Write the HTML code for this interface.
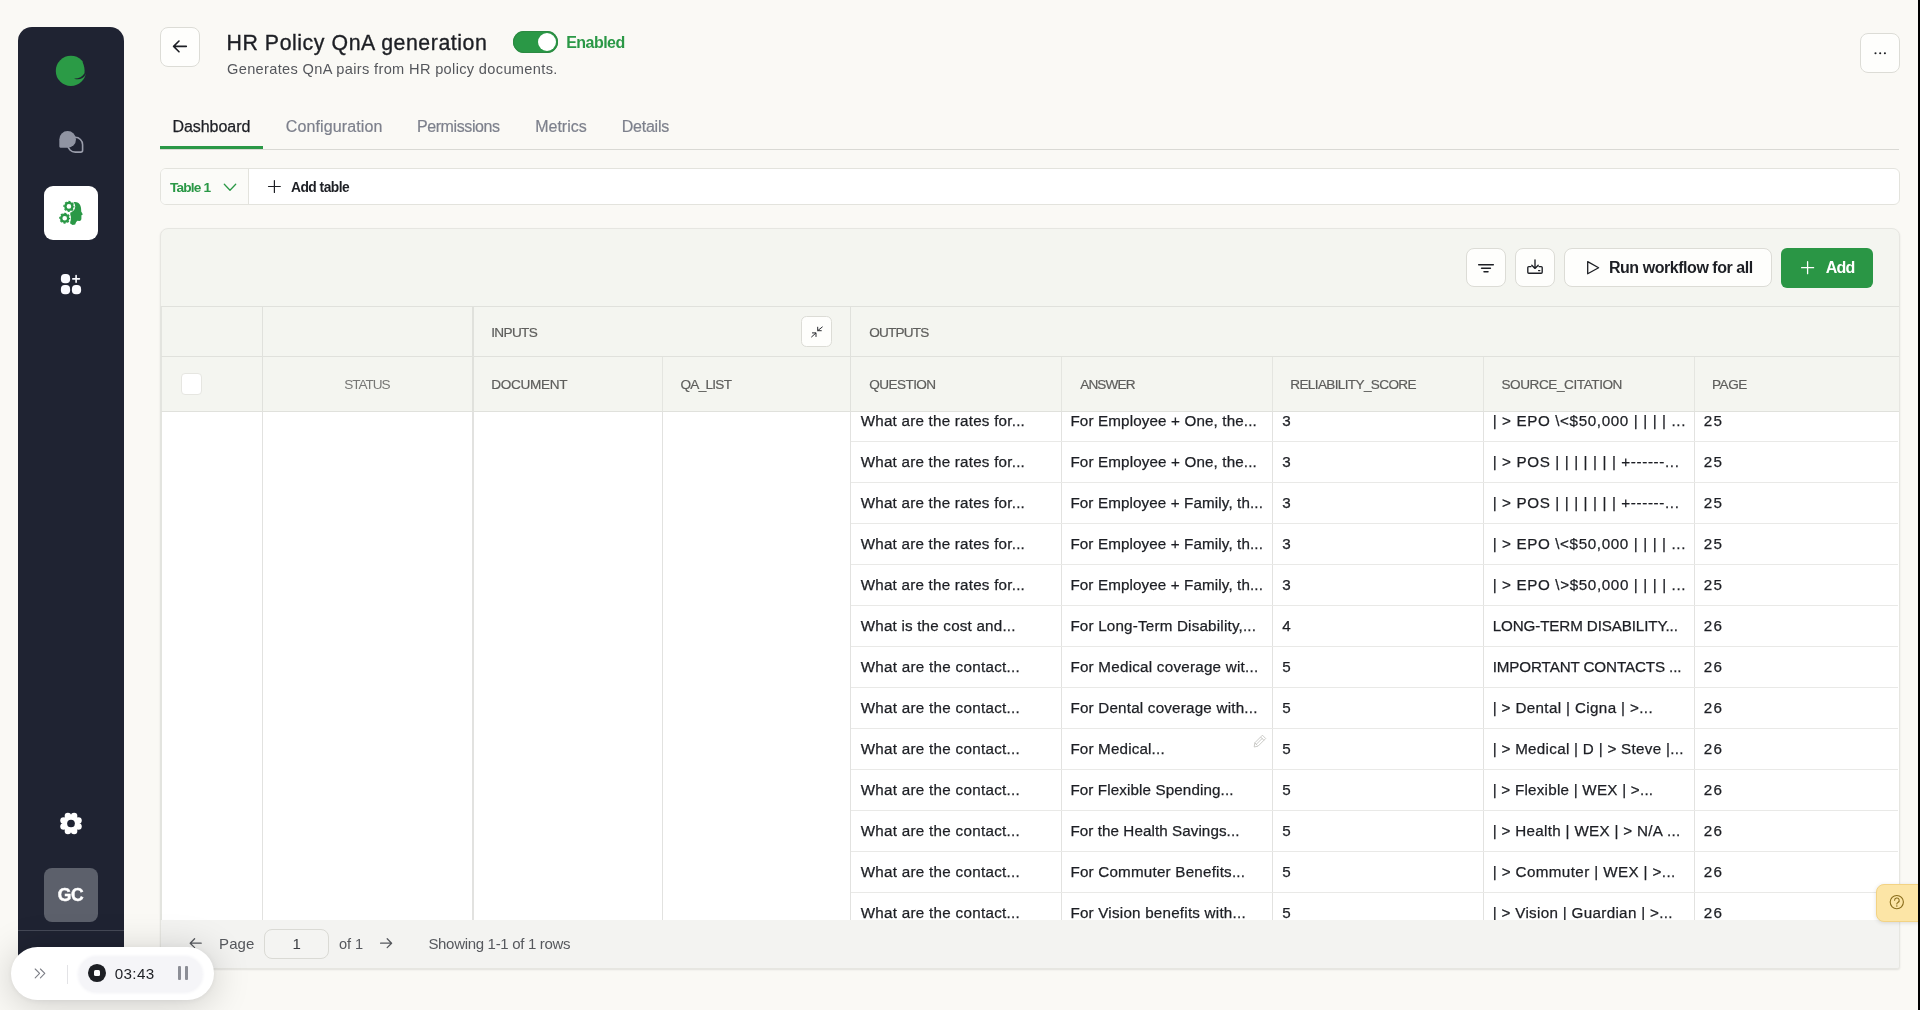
<!DOCTYPE html>
<html lang="en">
<head>
<meta charset="utf-8">
<title>HR Policy QnA generation</title>
<style>
*{box-sizing:border-box;margin:0;padding:0}
html,body{width:1920px;height:1010px;overflow:hidden}
body{background:#faf9f5;font-family:"Liberation Sans",sans-serif;color:#1d1f24;position:relative}
.abs{position:absolute}
.t{position:absolute;white-space:nowrap;line-height:20px;color:#1d1f24}
svg{position:absolute;overflow:visible}
.btn{position:absolute;background:#fefefc;border:1px solid #dcdcd6;border-radius:8px}
</style>
</head>
<body>
<div id="root" style="position:absolute;left:0;top:0;width:1920px;height:1010px;overflow:hidden;will-change:transform">
<div class="abs" style="left:18px;top:27px;width:106px;height:956px;background:#1f2332;border-radius:14px"></div>
<svg style="left:55px;top:55px" width="32" height="32" viewBox="55 55 32 32">
<circle cx="70.9" cy="70.9" r="15.1" fill="#2b9b46"/>
<path d="M74 78.5 C78.4 78.8 82.4 77 84.5 73.2 C84.9 69.6 84.3 66 82.6 62 L88 62 L88 73.4 L85.8 74.2 C83.6 78.6 78.6 80.6 74 78.5 Z" fill="#1f2332"/>
</svg>
<svg style="left:56px;top:128px" width="30" height="28" viewBox="56 128 30 28">
<path d="M75.3 152.1 H80.7 Q82.6 152.1 82.6 150.2 V144.7 A7.4 7.4 0 1 0 75.3 152.1 Z" fill="none" stroke="#9a9dab" stroke-width="1.6" stroke-linejoin="round"/>
<path d="M59.3 139.4 a8.35 8.35 0 1 1 8.35 8.35 h-7.2 q-1.15 0 -1.15 -1.15 z" fill="#9094a2"/>
</svg>
<div class="abs" style="left:44px;top:186px;width:54px;height:54px;background:#fff;border-radius:9px"></div>
<svg style="left:58px;top:200px" width="26" height="26" viewBox="58 200 26 26">
<path fill="#2a9846" d="M70.4 201.9 H74.8 C77.2 201.8 79.2 203 80.1 205 C81 207 81.3 209.2 81.2 211.4 L82.6 213.9 C82.8 214.5 82.4 214.9 81.4 215.2 L81.4 218.6 C81.4 220.2 80.6 221 79.2 220.9 L77.4 220.8 C76.4 221.6 75.6 223 75.2 224.6 L72.6 224.9 L70.2 223.4 Z"/>
<circle cx="68.9" cy="206.4" r="6.3" fill="#fff"/><circle cx="64.7" cy="218.2" r="6.3" fill="#fff"/>
<g fill="none" stroke="#2a9846">
<circle cx="68.9" cy="206.4" r="3.5" stroke-width="2.4"/>
<circle cx="68.9" cy="206.4" r="4.9" stroke-width="1.3" stroke-dasharray="2.05 1.8" stroke-dashoffset="1.02"/>
<circle cx="64.7" cy="218.2" r="3.5" stroke-width="2.4"/>
<circle cx="64.7" cy="218.2" r="4.9" stroke-width="1.3" stroke-dasharray="2.05 1.8" stroke-dashoffset="1.02"/>
</g>
</svg>
<svg style="left:60px;top:273px" width="22" height="22" viewBox="60 273 22 22">
<g fill="#fafbff"><rect x="60.9" y="274" width="9.2" height="9.2" rx="3.9"/><rect x="60.9" y="285" width="9.2" height="9.2" rx="3.9"/><rect x="71.9" y="285" width="9.2" height="9.2" rx="3.9"/></g>
<path d="M76.1 275.6 v6.6 M72.8 278.9 h6.6" stroke="#fafbff" stroke-width="1.6" stroke-linecap="round" fill="none"/>
</svg>
<svg style="left:59px;top:812px" width="24" height="24" viewBox="59 812 24 24"><g fill="#fff"><circle cx="71" cy="823.5" r="8.6"/><circle cx="78.48" cy="826.60" r="3.25"/><circle cx="74.10" cy="830.98" r="3.25"/><circle cx="67.90" cy="830.98" r="3.25"/><circle cx="63.52" cy="826.60" r="3.25"/><circle cx="63.52" cy="820.40" r="3.25"/><circle cx="67.90" cy="816.02" r="3.25"/><circle cx="74.10" cy="816.02" r="3.25"/><circle cx="78.48" cy="820.40" r="3.25"/></g><circle cx="71" cy="823.5" r="3.85" fill="#1f2332"/></svg>
<div class="abs" style="left:44px;top:868px;width:54px;height:53.5px;background:#5c606b;border-radius:8px"></div>
<span id="t0" class="t" style="left:57.70px;top:885.01px;font-size:17.5px;font-weight:700;color:#fff;letter-spacing:-0.212px;-webkit-text-stroke:0.45px #fff;">GC</span>
<div class="abs" style="left:18px;top:930px;width:106px;height:1px;background:#454957;"></div>
<div class="btn" style="left:160px;top:27px;width:40px;height:40px"></div>
<svg style="left:172px;top:39px" width="16" height="16" viewBox="172 39 16 16"><path d="M186.3 46.4 H173.6 M179 41 l-5.4 5.4 5.4 5.4" fill="none" stroke="#1d1f24" stroke-width="1.6" stroke-linecap="round" stroke-linejoin="round"/></svg>
<span id="t1" class="t" style="left:226.50px;top:33.01px;font-size:21.3px;letter-spacing:0.562px;-webkit-text-stroke:0.35px #1d1f24;">HR Policy QnA generation</span>
<div class="abs" style="left:513px;top:31px;width:45px;height:22px;border-radius:11px;background:#2a9846;box-shadow:inset 0 0 0 1px #2c8a42"></div>
<div class="abs" style="left:537.8px;top:33px;width:18.2px;height:18.2px;border-radius:50%;background:#fff"></div>
<span id="t2" class="t" style="left:566.20px;top:33.01px;font-size:16px;font-weight:700;color:#2a9846;letter-spacing:-0.527px;">Enabled</span>
<span id="t3" class="t" style="left:227.00px;top:59.02px;font-size:14.6px;color:#55575c;letter-spacing:0.337px;">Generates QnA pairs from HR policy documents.</span>
<div class="btn" style="left:1860px;top:33px;width:40px;height:40px"></div>
<svg style="left:1872px;top:50px" width="16" height="6" viewBox="1872 50 16 6"><g fill="#1d1f24"><circle cx="1875.5" cy="53.2" r="1.05"/><circle cx="1880.2" cy="53.2" r="1.05"/><circle cx="1884.9" cy="53.2" r="1.05"/></g></svg>
<span id="t4" class="t" style="left:172.50px;top:117.01px;font-size:16px;letter-spacing:-0.060px;-webkit-text-stroke:0.25px #1d1f24;">Dashboard</span>
<span id="t5" class="t" style="left:285.80px;top:117.01px;font-size:16px;color:#7d808c;letter-spacing:0.119px;-webkit-text-stroke:0.2px #7d808c;">Configuration</span>
<span id="t6" class="t" style="left:416.90px;top:117.01px;font-size:16px;color:#7d808c;letter-spacing:-0.394px;-webkit-text-stroke:0.2px #7d808c;">Permissions</span>
<span id="t7" class="t" style="left:535.20px;top:117.01px;font-size:16px;color:#7d808c;letter-spacing:-0.010px;-webkit-text-stroke:0.2px #7d808c;">Metrics</span>
<span id="t8" class="t" style="left:621.80px;top:117.01px;font-size:16px;color:#7d808c;letter-spacing:-0.251px;-webkit-text-stroke:0.2px #7d808c;">Details</span>
<div class="abs" style="left:160px;top:149px;width:1739px;height:1px;background:#d9d9d4;"></div>
<div class="abs" style="left:160px;top:146px;width:103px;height:3px;background:#2a9846;"></div>
<div class="abs" style="left:160px;top:168px;width:1740px;height:37px;background:#fff;border:1px solid #e3e3dd;border-radius:6px"></div>
<div class="abs" style="left:161px;top:169px;width:87px;height:35px;background:#fbfbf8;border-radius:5px 0 0 5px"></div>
<div class="abs" style="left:248px;top:169px;width:1px;height:35px;background:#e3e3dd;"></div>
<span id="t9" class="t" style="left:170.00px;top:178.00px;font-size:13.7px;font-weight:700;color:#2a9846;letter-spacing:-0.824px;">Table 1</span>
<svg style="left:222px;top:182px" width="16" height="12" viewBox="222 182 16 12"><path d="M224.3 184.3 l5.7 5.9 5.7 -5.9" fill="none" stroke="#2a9846" stroke-width="1.3" stroke-linecap="round" stroke-linejoin="round"/></svg>
<svg style="left:267px;top:179px" width="16" height="16" viewBox="267 179 16 16"><path d="M274.4 180.6 v11.8 M268.5 186.5 h11.8" fill="none" stroke="#1d1f24" stroke-width="1.2" stroke-linecap="round"/></svg>
<span id="t10" class="t" style="left:291.00px;top:178.00px;font-size:13.8px;font-weight:700;letter-spacing:-0.523px;">Add table</span>
<div class="abs" style="left:160px;top:228px;width:1740px;height:741px;background:#f4f5f0;border:1px solid #e6e6e1;border-radius:8px 8px 3px 3px;box-shadow:0 1px 2px rgba(0,0,0,.10)"></div>
<div class="btn" style="left:1466px;top:248px;width:40px;height:39px"></div>
<svg style="left:1477px;top:262px" width="18" height="12" viewBox="1477 262 18 12"><path d="M1478.7 264.8 h14.6 M1481.6 268.3 h8.8 M1484 271.8 h4" fill="none" stroke="#1d1f24" stroke-width="1.5" stroke-linecap="round"/></svg>
<div class="btn" style="left:1515px;top:248px;width:40px;height:39px"></div>
<svg style="left:1526px;top:258px" width="18" height="18" viewBox="1526 258 18 18"><g fill="none" stroke="#1d1f24" stroke-width="1.35" stroke-linecap="round" stroke-linejoin="round"><path d="M1535 259.8 v8.4 M1531.8 265.2 l3.2 3.2 3.2 -3.2"/><path d="M1531 266.6 h-2.2 a1 1 0 0 0 -1 1 v4.6 a1 1 0 0 0 1 1 h12.4 a1 1 0 0 0 1 -1 v-4.6 a1 1 0 0 0 -1 -1 h-2.2"/><path d="M1538.6 270.6 h1.2"/></g></svg>
<div class="btn" style="left:1564px;top:248px;width:208px;height:39px"></div>
<svg style="left:1586px;top:260px" width="15" height="16" viewBox="1586 260 15 16"><path d="M1587.7 261.6 v12.2 l10.9 -6.1 z" fill="none" stroke="#1d1f24" stroke-width="1.3" stroke-linejoin="round"/></svg>
<span id="t11" class="t" style="left:1608.90px;top:258.01px;font-size:16px;font-weight:700;letter-spacing:-0.450px;">Run workflow for all</span>
<div class="abs" style="left:1781px;top:247.5px;width:92px;height:40px;background:#2a9645;border-radius:6px"></div>
<svg style="left:1800px;top:260px" width="16" height="16" viewBox="1800 260 16 16"><path d="M1807.6 261.7 v12 M1801.6 267.7 h12" fill="none" stroke="#fff" stroke-width="1.3" stroke-linecap="round"/></svg>
<span id="t12" class="t" style="left:1825.80px;top:258.01px;font-size:16px;font-weight:700;color:#fff;letter-spacing:-0.868px;">Add</span>
<div class="abs" style="left:160px;top:306px;width:2px;height:614px;background:#e3e4df;"></div>
<div class="abs" style="left:162px;top:412px;width:1737px;height:508px;background:#fff;"></div>
<div class="abs" style="left:161px;top:306px;width:1738px;height:1px;background:#e0e1dc;"></div>
<div class="abs" style="left:161px;top:356px;width:1738px;height:1px;background:#e0e1dc;"></div>
<div class="abs" style="left:161px;top:411px;width:1738px;height:1px;background:#e0e1dc;"></div>
<div class="abs" style="left:262px;top:307px;width:1.3px;height:104px;background:#e0e1dc;"></div>
<div class="abs" style="left:472px;top:307px;width:2px;height:104px;background:#e0e1dc;"></div>
<div class="abs" style="left:850px;top:307px;width:1.3px;height:104px;background:#e0e1dc;"></div>
<div class="abs" style="left:661.8px;top:357px;width:1.3px;height:54px;background:#e4e5e0;"></div>
<div class="abs" style="left:1061px;top:357px;width:1.3px;height:54px;background:#e4e5e0;"></div>
<div class="abs" style="left:1272px;top:357px;width:1.3px;height:54px;background:#e4e5e0;"></div>
<div class="abs" style="left:1483px;top:357px;width:1.3px;height:54px;background:#e4e5e0;"></div>
<div class="abs" style="left:1694px;top:357px;width:1.3px;height:54px;background:#e4e5e0;"></div>
<div class="abs" style="left:262px;top:412px;width:1.3px;height:508px;background:#e2e2e0;"></div>
<div class="abs" style="left:472px;top:412px;width:2px;height:508px;background:#e2e2e0;"></div>
<div class="abs" style="left:661.8px;top:412px;width:1.3px;height:508px;background:#e2e2e0;"></div>
<div class="abs" style="left:850px;top:412px;width:1.3px;height:508px;background:#e2e2e0;"></div>
<div class="abs" style="left:1061px;top:412px;width:1.3px;height:508px;background:#e2e2e0;"></div>
<div class="abs" style="left:1272px;top:412px;width:1.3px;height:508px;background:#e2e2e0;"></div>
<div class="abs" style="left:1483px;top:412px;width:1.3px;height:508px;background:#e2e2e0;"></div>
<div class="abs" style="left:1694px;top:412px;width:1.3px;height:508px;background:#e2e2e0;"></div>
<div class="abs" style="left:851px;top:441px;width:1047px;height:1px;background:#e9e9e7;"></div>
<div class="abs" style="left:851px;top:482px;width:1047px;height:1px;background:#e9e9e7;"></div>
<div class="abs" style="left:851px;top:523px;width:1047px;height:1px;background:#e9e9e7;"></div>
<div class="abs" style="left:851px;top:564px;width:1047px;height:1px;background:#e9e9e7;"></div>
<div class="abs" style="left:851px;top:605px;width:1047px;height:1px;background:#e9e9e7;"></div>
<div class="abs" style="left:851px;top:646px;width:1047px;height:1px;background:#e9e9e7;"></div>
<div class="abs" style="left:851px;top:687px;width:1047px;height:1px;background:#e9e9e7;"></div>
<div class="abs" style="left:851px;top:728px;width:1047px;height:1px;background:#e9e9e7;"></div>
<div class="abs" style="left:851px;top:769px;width:1047px;height:1px;background:#e9e9e7;"></div>
<div class="abs" style="left:851px;top:810px;width:1047px;height:1px;background:#e9e9e7;"></div>
<div class="abs" style="left:851px;top:851px;width:1047px;height:1px;background:#e9e9e7;"></div>
<div class="abs" style="left:851px;top:892px;width:1047px;height:1px;background:#e9e9e7;"></div>
<span id="t13" class="t" style="left:491.20px;top:323.01px;font-size:13.6px;color:#5e5e5c;letter-spacing:-0.638px;-webkit-text-stroke:0.2px #5e5e5c;">INPUTS</span>
<span id="t14" class="t" style="left:869.30px;top:323.01px;font-size:13.6px;color:#5e5e5c;letter-spacing:-0.814px;-webkit-text-stroke:0.2px #5e5e5c;">OUTPUTS</span>
<span id="t15" class="t" style="left:344.30px;top:375.01px;font-size:13.6px;color:#777775;letter-spacing:-1.088px;">STATUS</span>
<span id="t16" class="t" style="left:491.20px;top:375.01px;font-size:13.6px;color:#5e5e5c;letter-spacing:-0.320px;-webkit-text-stroke:0.2px #5e5e5c;">DOCUMENT</span>
<span id="t17" class="t" style="left:680.50px;top:375.01px;font-size:13.6px;color:#5e5e5c;letter-spacing:-0.736px;-webkit-text-stroke:0.2px #5e5e5c;">QA_LIST</span>
<span id="t18" class="t" style="left:869.30px;top:375.01px;font-size:13.6px;color:#5e5e5c;letter-spacing:-0.598px;-webkit-text-stroke:0.2px #5e5e5c;">QUESTION</span>
<span id="t19" class="t" style="left:1080.20px;top:375.01px;font-size:13.6px;color:#5e5e5c;letter-spacing:-0.871px;-webkit-text-stroke:0.2px #5e5e5c;">ANSWER</span>
<span id="t20" class="t" style="left:1290.30px;top:375.01px;font-size:13.6px;color:#5e5e5c;letter-spacing:-0.655px;-webkit-text-stroke:0.2px #5e5e5c;">RELIABILITY_SCORE</span>
<span id="t21" class="t" style="left:1501.50px;top:375.01px;font-size:13.6px;color:#5e5e5c;letter-spacing:-0.445px;-webkit-text-stroke:0.2px #5e5e5c;">SOURCE_CITATION</span>
<span id="t22" class="t" style="left:1712.00px;top:375.01px;font-size:13.6px;color:#5e5e5c;letter-spacing:-0.466px;-webkit-text-stroke:0.2px #5e5e5c;">PAGE</span>
<div class="abs" style="left:180.5px;top:373px;width:21.5px;height:21.5px;background:#fff;border:1px solid #e6e6e1;border-radius:4px"></div>
<div class="btn" style="left:801.3px;top:316.2px;width:30.8px;height:30.8px;border-radius:5.5px"></div>
<svg style="left:810px;top:325px" width="14" height="14" viewBox="810 325 14 14"><g fill="none" stroke="#2a2c31" stroke-width="1" stroke-linecap="round" stroke-linejoin="round"><path d="M822.3 327 l-4.4 3.5 M817.7 327.2 v3.5 h3.6"/><path d="M811.6 336.9 l4.2 -3.8 M812.4 332.9 h3.6 v3.6"/></g></svg>
<div class="abs" style="left:851px;top:412px;width:1047px;height:508px;overflow:hidden;-webkit-text-stroke:0.25px #1d1f24">
<span id="t23" class="t" style="left:9.70px;top:-1.00px;font-size:15.2px;letter-spacing:0.226px;">What are the rates for...</span>
<span id="t24" class="t" style="left:219.40px;top:-1.00px;font-size:15.2px;letter-spacing:0.146px;">For Employee + One, the...</span>
<span id="t25" class="t" style="left:431.30px;top:-1.00px;font-size:15.2px;">3</span>
<span id="t26" class="t" style="left:641.70px;top:-1.00px;font-size:15.2px;letter-spacing:0.630px;">| &gt; EPO \&lt;$50,000 | | | | ...</span>
<span id="t27" class="t" style="left:852.80px;top:-1.00px;font-size:15.2px;letter-spacing:1.240px;">25</span>
<span id="t28" class="t" style="left:9.70px;top:40.01px;font-size:15.2px;letter-spacing:0.226px;">What are the rates for...</span>
<span id="t29" class="t" style="left:219.40px;top:40.01px;font-size:15.2px;letter-spacing:0.146px;">For Employee + One, the...</span>
<span id="t30" class="t" style="left:431.30px;top:40.01px;font-size:15.2px;">3</span>
<span id="t31" class="t" style="left:641.70px;top:40.01px;font-size:15.2px;letter-spacing:0.634px;">| &gt; POS | | | | | | | +------...</span>
<span id="t32" class="t" style="left:852.80px;top:40.01px;font-size:15.2px;letter-spacing:1.240px;">25</span>
<span id="t33" class="t" style="left:9.70px;top:81.01px;font-size:15.2px;letter-spacing:0.226px;">What are the rates for...</span>
<span id="t34" class="t" style="left:219.40px;top:81.01px;font-size:15.2px;letter-spacing:0.123px;">For Employee + Family, th...</span>
<span id="t35" class="t" style="left:431.30px;top:81.01px;font-size:15.2px;">3</span>
<span id="t36" class="t" style="left:641.70px;top:81.01px;font-size:15.2px;letter-spacing:0.634px;">| &gt; POS | | | | | | | +------...</span>
<span id="t37" class="t" style="left:852.80px;top:81.01px;font-size:15.2px;letter-spacing:1.240px;">25</span>
<span id="t38" class="t" style="left:9.70px;top:122.01px;font-size:15.2px;letter-spacing:0.226px;">What are the rates for...</span>
<span id="t39" class="t" style="left:219.40px;top:122.01px;font-size:15.2px;letter-spacing:0.123px;">For Employee + Family, th...</span>
<span id="t40" class="t" style="left:431.30px;top:122.01px;font-size:15.2px;">3</span>
<span id="t41" class="t" style="left:641.70px;top:122.01px;font-size:15.2px;letter-spacing:0.630px;">| &gt; EPO \&lt;$50,000 | | | | ...</span>
<span id="t42" class="t" style="left:852.80px;top:122.01px;font-size:15.2px;letter-spacing:1.240px;">25</span>
<span id="t43" class="t" style="left:9.70px;top:163.01px;font-size:15.2px;letter-spacing:0.226px;">What are the rates for...</span>
<span id="t44" class="t" style="left:219.40px;top:163.01px;font-size:15.2px;letter-spacing:0.123px;">For Employee + Family, th...</span>
<span id="t45" class="t" style="left:431.30px;top:163.01px;font-size:15.2px;">3</span>
<span id="t46" class="t" style="left:641.70px;top:163.01px;font-size:15.2px;letter-spacing:0.634px;">| &gt; EPO \&gt;$50,000 | | | | ...</span>
<span id="t47" class="t" style="left:852.80px;top:163.01px;font-size:15.2px;letter-spacing:1.240px;">25</span>
<span id="t48" class="t" style="left:9.70px;top:204.01px;font-size:15.2px;letter-spacing:0.207px;">What is the cost and...</span>
<span id="t49" class="t" style="left:219.40px;top:204.01px;font-size:15.2px;letter-spacing:0.196px;">For Long-Term Disability,...</span>
<span id="t50" class="t" style="left:431.30px;top:204.01px;font-size:15.2px;">4</span>
<span id="t51" class="t" style="left:641.70px;top:204.01px;font-size:15.2px;letter-spacing:-0.123px;">LONG-TERM DISABILITY...</span>
<span id="t52" class="t" style="left:852.80px;top:204.01px;font-size:15.2px;letter-spacing:1.240px;">26</span>
<span id="t53" class="t" style="left:9.70px;top:245.01px;font-size:15.2px;letter-spacing:0.287px;">What are the contact...</span>
<span id="t54" class="t" style="left:219.40px;top:245.01px;font-size:15.2px;letter-spacing:0.244px;">For Medical coverage wit...</span>
<span id="t55" class="t" style="left:431.30px;top:245.01px;font-size:15.2px;">5</span>
<span id="t56" class="t" style="left:641.70px;top:245.01px;font-size:15.2px;letter-spacing:-0.116px;">IMPORTANT CONTACTS ...</span>
<span id="t57" class="t" style="left:852.80px;top:245.01px;font-size:15.2px;letter-spacing:1.240px;">26</span>
<span id="t58" class="t" style="left:9.70px;top:286.01px;font-size:15.2px;letter-spacing:0.287px;">What are the contact...</span>
<span id="t59" class="t" style="left:219.40px;top:286.01px;font-size:15.2px;letter-spacing:0.212px;">For Dental coverage with...</span>
<span id="t60" class="t" style="left:431.30px;top:286.01px;font-size:15.2px;">5</span>
<span id="t61" class="t" style="left:641.70px;top:286.01px;font-size:15.2px;letter-spacing:0.366px;">| &gt; Dental | Cigna | &gt;...</span>
<span id="t62" class="t" style="left:852.80px;top:286.01px;font-size:15.2px;letter-spacing:1.240px;">26</span>
<span id="t63" class="t" style="left:9.70px;top:327.01px;font-size:15.2px;letter-spacing:0.287px;">What are the contact...</span>
<span id="t64" class="t" style="left:219.40px;top:327.01px;font-size:15.2px;letter-spacing:0.171px;">For Medical...</span>
<span id="t65" class="t" style="left:431.30px;top:327.01px;font-size:15.2px;">5</span>
<span id="t66" class="t" style="left:641.70px;top:327.01px;font-size:15.2px;letter-spacing:0.301px;">| &gt; Medical | D | &gt; Steve |...</span>
<span id="t67" class="t" style="left:852.80px;top:327.01px;font-size:15.2px;letter-spacing:1.240px;">26</span>
<span id="t68" class="t" style="left:9.70px;top:368.01px;font-size:15.2px;letter-spacing:0.287px;">What are the contact...</span>
<span id="t69" class="t" style="left:219.40px;top:368.01px;font-size:15.2px;letter-spacing:0.118px;">For Flexible Spending...</span>
<span id="t70" class="t" style="left:431.30px;top:368.01px;font-size:15.2px;">5</span>
<span id="t71" class="t" style="left:641.70px;top:368.01px;font-size:15.2px;letter-spacing:0.247px;">| &gt; Flexible | WEX | &gt;...</span>
<span id="t72" class="t" style="left:852.80px;top:368.01px;font-size:15.2px;letter-spacing:1.240px;">26</span>
<span id="t73" class="t" style="left:9.70px;top:409.01px;font-size:15.2px;letter-spacing:0.287px;">What are the contact...</span>
<span id="t74" class="t" style="left:219.40px;top:409.01px;font-size:15.2px;letter-spacing:0.078px;">For the Health Savings...</span>
<span id="t75" class="t" style="left:431.30px;top:409.01px;font-size:15.2px;">5</span>
<span id="t76" class="t" style="left:641.70px;top:409.01px;font-size:15.2px;letter-spacing:0.320px;">| &gt; Health | WEX | &gt; N/A ...</span>
<span id="t77" class="t" style="left:852.80px;top:409.01px;font-size:15.2px;letter-spacing:1.240px;">26</span>
<span id="t78" class="t" style="left:9.70px;top:450.01px;font-size:15.2px;letter-spacing:0.287px;">What are the contact...</span>
<span id="t79" class="t" style="left:219.40px;top:450.01px;font-size:15.2px;letter-spacing:0.216px;">For Commuter Benefits...</span>
<span id="t80" class="t" style="left:431.30px;top:450.01px;font-size:15.2px;">5</span>
<span id="t81" class="t" style="left:641.70px;top:450.01px;font-size:15.2px;letter-spacing:0.399px;">| &gt; Commuter | WEX | &gt;...</span>
<span id="t82" class="t" style="left:852.80px;top:450.01px;font-size:15.2px;letter-spacing:1.240px;">26</span>
<span id="t83" class="t" style="left:9.70px;top:491.01px;font-size:15.2px;letter-spacing:0.287px;">What are the contact...</span>
<span id="t84" class="t" style="left:219.40px;top:491.01px;font-size:15.2px;letter-spacing:0.224px;">For Vision benefits with...</span>
<span id="t85" class="t" style="left:431.30px;top:491.01px;font-size:15.2px;">5</span>
<span id="t86" class="t" style="left:641.70px;top:491.01px;font-size:15.2px;letter-spacing:0.322px;">| &gt; Vision | Guardian | &gt;...</span>
<span id="t87" class="t" style="left:852.80px;top:491.01px;font-size:15.2px;letter-spacing:1.240px;">26</span>
</div>
<svg style="left:1253px;top:734px" width="14" height="14" viewBox="1253 734 14 14"><g fill="none" stroke="#bebeba" stroke-width="0.8" stroke-linejoin="round"><path d="M1262.4 735.2 l3.3 3.3 -7.6 7.6 -3.9 0.9 0.6 -4.2 z"/><path d="M1260.6 737 l3.3 3.3 M1254.8 742.8 l2.5 2.5 M1256.3 744.3 l6 -6"/></g></svg>
<div class="abs" style="left:161px;top:920px;width:1738px;height:48px;background:#f3f3f1;border-radius:0 0 2px 2px"></div>
<svg style="left:188px;top:936px" width="16" height="14" viewBox="188 936 16 14"><path d="M201.2 943.2 H190.2 M194.6 938.8 l-4.4 4.4 4.4 4.4" fill="none" stroke="#56585d" stroke-width="1.3" stroke-linecap="round" stroke-linejoin="round"/></svg>
<span id="t88" class="t" style="left:219.10px;top:934.01px;font-size:15px;color:#56585d;letter-spacing:0.065px;">Page</span>
<div class="abs" style="left:263.5px;top:929px;width:65.5px;height:30px;background:#f4f4f2;border:1px solid #dadad5;border-radius:8px"></div>
<span id="t89" class="t" style="left:292.50px;top:934.01px;font-size:15px;color:#3a3c41;">1</span>
<span id="t90" class="t" style="left:338.90px;top:934.01px;font-size:14.6px;color:#56585d;">of 1</span>
<svg style="left:378px;top:936px" width="16" height="14" viewBox="378 936 16 14"><path d="M380.6 943.2 H391.6 M387.2 938.8 l4.4 4.4 -4.4 4.4" fill="none" stroke="#56585d" stroke-width="1.3" stroke-linecap="round" stroke-linejoin="round"/></svg>
<span id="t91" class="t" style="left:428.40px;top:934.01px;font-size:15px;color:#56585d;letter-spacing:-0.311px;">Showing 1-1 of 1 rows</span>
<div class="abs" style="left:1876px;top:884px;width:46px;height:37.5px;background:#fce5a6;border:1px solid #f3d384;border-radius:8px 0 0 8px;box-shadow:0 1px 4px rgba(0,0,0,.12)"></div>
<svg style="left:1889px;top:894px" width="16" height="16" viewBox="1889 894 16 16"><circle cx="1896.8" cy="902.1" r="6.6" fill="none" stroke="#8a6d1a" stroke-width="1.1"/><path d="M1894.6 900.3 a2.3 2.3 0 1 1 3.3 2.1 c-0.8 0.4 -1.1 0.8 -1.1 1.6" fill="none" stroke="#8a6d1a" stroke-width="1.1" stroke-linecap="round"/><circle cx="1896.8" cy="905.9" r="0.75" fill="#8a6d1a"/></svg>
<div class="abs" style="left:11px;top:947px;width:203px;height:53px;background:#fff;border-radius:27px;box-shadow:0 4px 36px 2px rgba(0,0,0,.17),0 1px 6px rgba(0,0,0,.06)"></div>
<svg style="left:33px;top:967px" width="14" height="13" viewBox="33 967 14 13"><path d="M35.2 969 l4.4 4.4 -4.4 4.4 M40.4 969 l4.4 4.4 -4.4 4.4" fill="none" stroke="#7c7e86" stroke-width="1.1" stroke-linecap="round" stroke-linejoin="round"/></svg>
<div class="abs" style="left:67px;top:964.5px;width:1px;height:19.5px;background:#e3e3e6;"></div>
<div class="abs" style="left:79px;top:956.5px;width:122.5px;height:35px;background:#f5f5f8;border-radius:17.5px;box-shadow:0 0 3px 1.5px #f5f5f8"></div>
<div class="abs" style="left:87.8px;top:964.2px;width:17.8px;height:17.8px;background:#1d1f24;border-radius:50%"></div>
<div class="abs" style="left:93.7px;top:970.1px;width:6px;height:6px;background:#fff;border-radius:1.5px"></div>
<span id="t92" class="t" style="left:114.75px;top:964.01px;font-size:15.2px;letter-spacing:0.358px;">03:43</span>
<div class="abs" style="left:178.1px;top:965.7px;width:3.2px;height:14.4px;background:#8c8e96;border-radius:1px"></div>
<div class="abs" style="left:184.7px;top:965.7px;width:3.2px;height:14.4px;background:#8c8e96;border-radius:1px"></div>
<div class="abs" style="left:1918px;top:0px;width:2px;height:1010px;background:#000;"></div>
</div>
</body>
</html>
